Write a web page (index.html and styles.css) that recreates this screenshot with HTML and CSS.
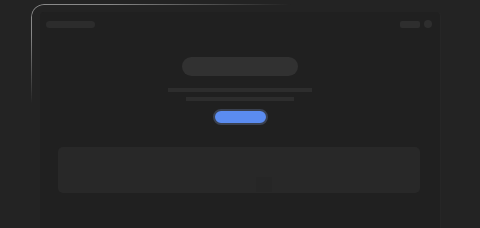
FILE: index.html
```html
<!DOCTYPE html>
<html lang="en">
<head>
    <meta charset="UTF-8">
    <meta name="viewport" content="width=device-width, initial-scale=1.0">
    <title>Device Placeholder</title>
    <link rel="stylesheet" href="styles.css">
</head>
<body>
    <div class="device">
        <div class="screen">
            <div class="top-bar">
                <span class="logo-pill"></span>
                <div class="top-actions">
                    <span class="action-pill"></span>
                    <span class="action-dot"></span>
                </div>
            </div>
            <div class="hero">
                <span class="hero-title"></span>
                <span class="hero-line long"></span>
                <span class="hero-line short"></span>
                <span class="hero-button"></span>
            </div>
            <div class="card">
                <span class="card-mark"></span>
            </div>
        </div>
    </div>
</body>
</html>
```

FILE: styles.css
```css
/* General Reset */
* {
    margin: 0;
    padding: 0;
    box-sizing: border-box;
}

body {
    background: #232323;
    height: 228px;
    overflow: hidden;
    font-family: "Liberation Sans", Arial, sans-serif;
}

.device {
    position: relative;
    margin: 4px 0 0 31px;
    width: 418px;
    height: 224px;
    padding: 8px 9px 0 9px;
    border-radius: 13px 13px 0 0;
}

/* glossy frame edge, only the top-left corner catches the light */
.device::before {
    content: "";
    position: absolute;
    inset: 0;
    border-radius: 13px 13px 0 0;
    border: 1.5px solid rgba(205, 205, 205, 0.6);
    border-bottom: none;
    -webkit-mask-image: radial-gradient(ellipse 260px 100px at 0 0, #000 30%, transparent 100%);
    mask-image: radial-gradient(ellipse 260px 100px at 0 0, #000 30%, transparent 100%);
    pointer-events: none;
}

.screen {
    height: 100%;
    background: #202020;
    border-radius: 4px 4px 0 0;
    box-shadow: 1px 0 0 #262626;
    filter: blur(0.4px);
}

.top-bar {
    display: flex;
    justify-content: space-between;
    align-items: center;
    padding: 8px 8px 0 6px;
}

.logo-pill {
    display: block;
    width: 49px;
    height: 7px;
    border-radius: 4px;
    background: #2c2c2c;
}

.top-actions {
    display: flex;
    align-items: center;
    gap: 4px;
}

.action-pill {
    display: block;
    width: 20px;
    height: 7px;
    border-radius: 2px;
    background: #2e2e2e;
}

.action-dot {
    display: block;
    width: 8px;
    height: 8px;
    border-radius: 50%;
    background: #2e2e2e;
}

.hero {
    display: flex;
    flex-direction: column;
    align-items: center;
    padding-top: 29px;
}

.hero-title {
    display: block;
    width: 116px;
    height: 19px;
    border-radius: 10px;
    background: #313131;
}

.hero-line {
    display: block;
    height: 4px;
    background: #2d2d2d;
}

.hero-line.long {
    width: 144px;
    margin-top: 12px;
}

.hero-line.short {
    width: 108px;
    margin-top: 5px;
}

.hero-button {
    display: block;
    width: 55px;
    height: 16px;
    margin-top: 8px;
    border-radius: 8px;
    background: #5b8cf0;
    border: 2px solid #3a4150;
}

.card {
    position: relative;
    margin: 22px 20px 0 18px;
    height: 46px;
    border-radius: 5px;
    background: #282828;
}

.card-mark {
    position: absolute;
    left: 198px;
    top: 30px;
    width: 16px;
    height: 15px;
    background: #262626;
}
```
